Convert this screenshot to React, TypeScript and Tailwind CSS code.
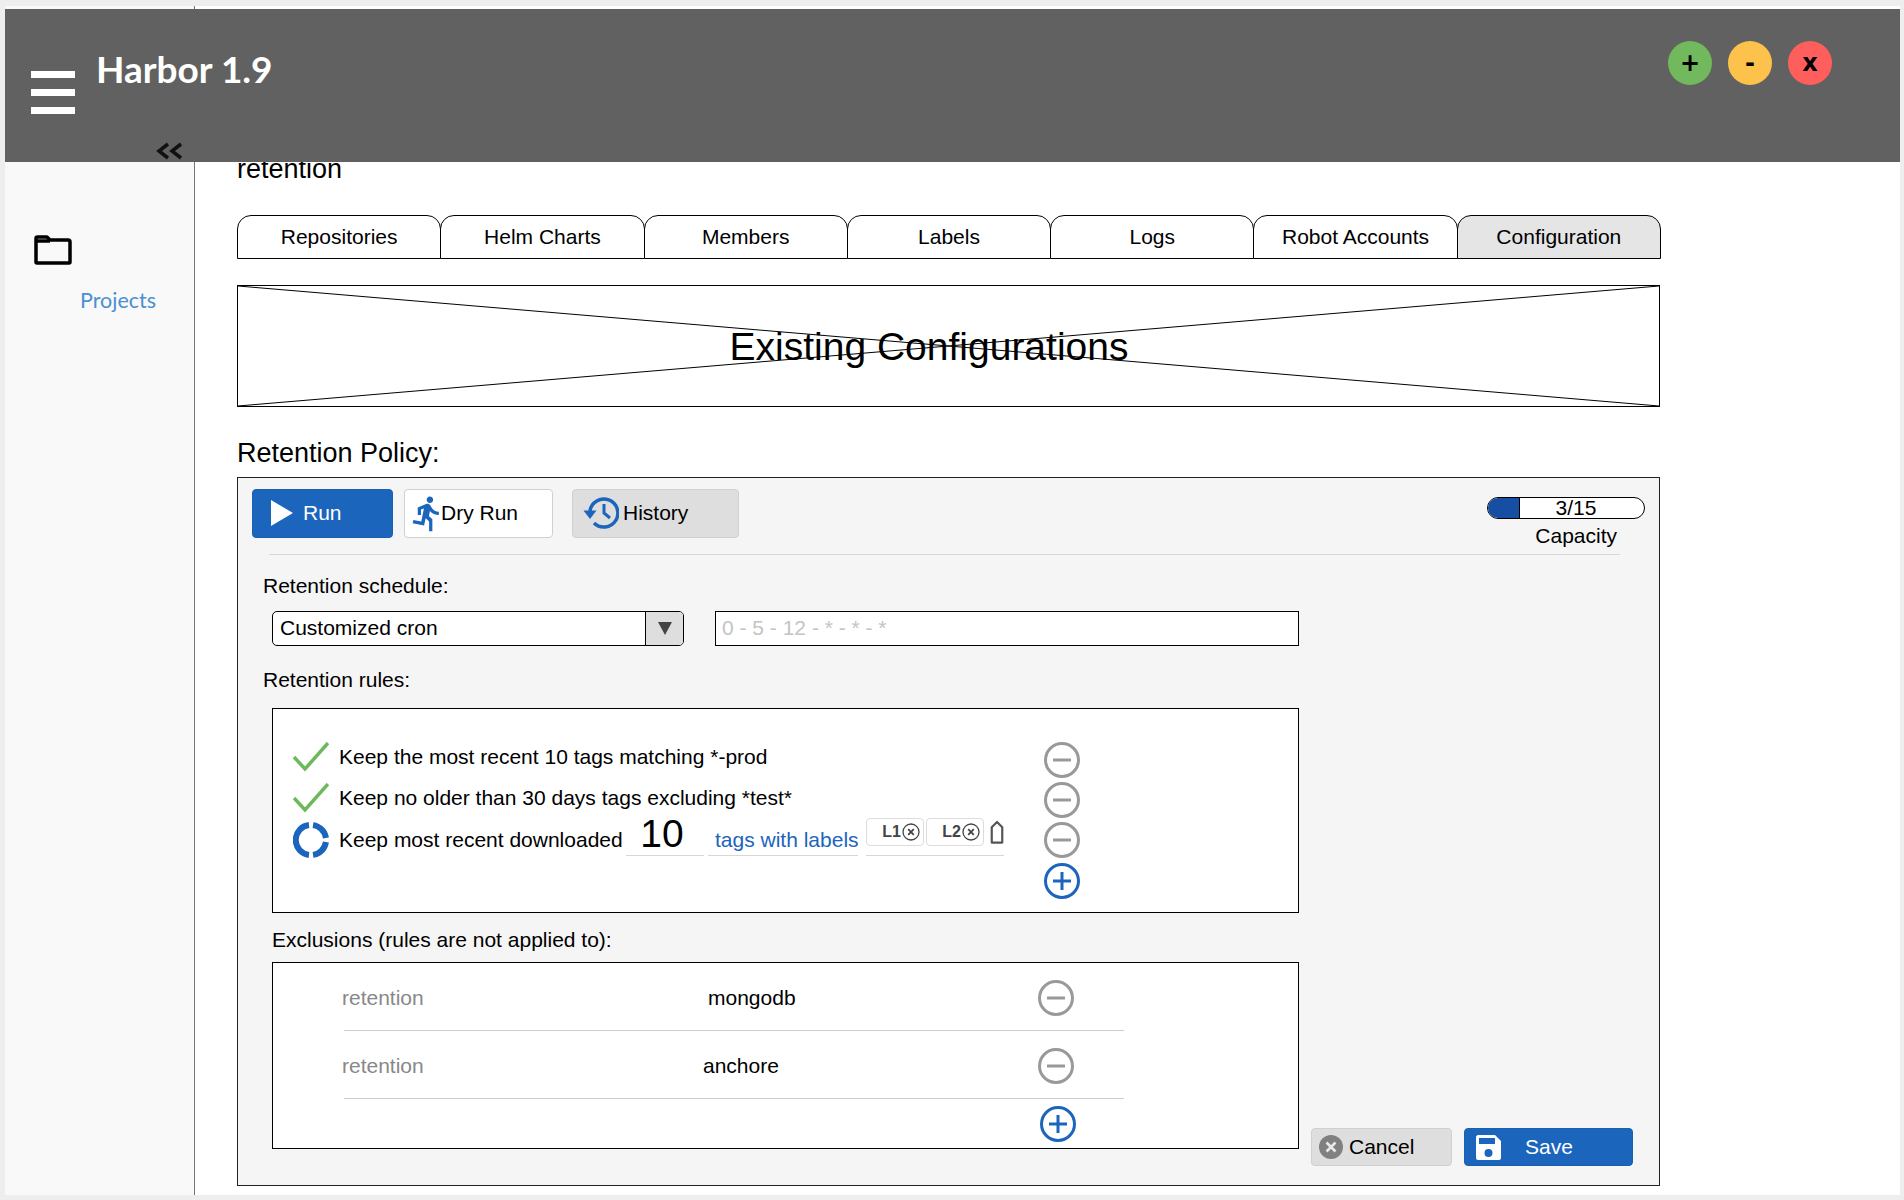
import { MdDirectionsRun } from "react-icons/md";

const tabs = ["Repositories", "Helm Charts", "Members", "Labels", "Logs", "Robot Accounts", "Configuration"];

function CircleIcon({ plus }: { plus?: boolean }) {
    const color = plus ? "#1b65bd" : "#999999";
    return (
        <svg width="36" height="36" viewBox="0 0 36 36" fill="none" stroke={color} strokeWidth="3">
            <circle cx="18" cy="18" r="16.5" />
            <path d="M9 18H27" />
            {plus && <path d="M18 9V27" />}
        </svg>
    );
}

function Check() {
    return (
        <svg width="36" height="30" viewBox="0 0 36 30" fill="none" stroke="#6cb95b" strokeWidth="3.5">
            <path d="M1 15L12 27L35 1" />
        </svg>
    );
}

function Spinner() {
    return (
        <svg width="36" height="36" viewBox="0 0 36 36" fill="none" stroke="#1b65bd" strokeWidth="6">
            <path d="M16 3.1A15 15 0 0 0 16 32.9" />
            <path d="M20 3.1A15 15 0 0 1 32.9 16" />
            <path d="M32.9 20A15 15 0 0 1 20 32.9" />
        </svg>
    );
}

function HistoryIcon() {
    return (
        <svg width="36" height="36" viewBox="0 0 36 36" fill="none" stroke="#1b65bd" strokeWidth="3.5">
            <path d="M11 28A14 14 0 1 0 7 16" />
            <path d="M0.5 15.5H13.5L7 24Z" fill="#1b65bd" stroke="none" />
            <path d="M21 9V18L27 23" strokeWidth="3" />
        </svg>
    );
}

function Chip({ name }: { name: string }) {
    return (
        <div className="w-[58px] h-[28px] shrink-0 border border-[#dddddd] rounded-[4px] flex items-center justify-end pr-[3px] gap-[1px] text-[16px] font-bold text-[#444444]">
            {name}
            <svg width="18" height="18" viewBox="0 0 18 18" fill="none" stroke="#444444" strokeWidth="1.3">
                <circle cx="9" cy="9" r="8" />
                <path d="M6.2 6.2L11.8 11.8M11.8 6.2L6.2 11.8" strokeWidth="1.8" />
            </svg>
        </div>
    );
}

function RoundButton({ bg, label }: { bg: string; label: string }) {
    return (
        <div className={`w-[44px] h-[44px] rounded-full flex items-center justify-center text-[24px] font-bold text-black font-['DejaVu_Sans'] ${bg}`}>
            {label}
        </div>
    );
}

function ExclusionRow({ name, offset }: { name: string; offset: string }) {
    return (
        <div className="ml-[71px] w-[780px] h-[68px] border-b border-[#cccccc] flex items-center pt-[3px]">
            <span className="w-[300px] shrink-0 -ml-[2px] text-[#888888]">retention</span>
            <span className={offset}>{name}</span>
            <div className="ml-auto mr-[50px]">
                <CircleIcon />
            </div>
        </div>
    );
}

export default function App() {
    return (
        <div className="w-full h-[1200px] bg-[#eeeeee] pl-[5px] pr-[4px] pt-[6px] font-['Liberation_Sans',sans-serif] text-[21px] text-black overflow-hidden">
            <div className="h-[3px] flex bg-white">
                <div className="w-[190px] bg-[#f9f9f9] border-r border-[#777777]"></div>
            </div>
            <header className="relative z-10 h-[153px] bg-[#616161] flex">
                <div className="w-[44px] ml-[26px] mt-[62px] flex flex-col gap-[11px]">
                    <div className="h-[7px] bg-white"></div>
                    <div className="h-[7px] bg-white"></div>
                    <div className="h-[7px] bg-white"></div>
                </div>
                <div className="ml-[21px] mt-[36px] font-['Lato',sans-serif] font-bold text-[37px] leading-[48px] text-white">Harbor 1.9</div>
                <svg className="absolute left-[151px] top-[132px]" width="28" height="20" viewBox="0 0 28 20" fill="none" stroke="#111111" strokeWidth="3.5">
                    <path d="M12 3L3 10L12 17M25 3L16 10L25 17" />
                </svg>
                <div className="ml-auto mr-[68px] mt-[32px] flex gap-[16px]">
                    <RoundButton bg="bg-[#72b85c]" label="+" />
                    <RoundButton bg="bg-[#fdc24b]" label="-" />
                    <RoundButton bg="bg-[#ff5f5c]" label="x" />
                </div>
            </header>
            <div className="h-[1033px] flex">
                <aside className="w-[190px] shrink-0 bg-[#f9f9f9] border-r border-[#777777]">
                    <svg className="ml-[29px] mt-[73px]" width="38" height="30" viewBox="0 0 38 30" fill="none" stroke="#000000" strokeWidth="3.5">
                        <path d="M2 27V3.5C2 2.5 2.5 2 3.5 2H13L16 5H34C35.2 5 36 5.8 36 7V27C36 27.6 35.6 28 35 28H3C2.4 28 2 27.6 2 27Z" strokeLinejoin="round" />
                        <path d="M2 6H16" />
                    </svg>
                    <div className="ml-[75px] mt-[20px] font-['Lato',sans-serif] text-[21.5px] leading-[30px] text-[#4a90d0]">Projects</div>
                </aside>
                <main className="flex-1 bg-white pl-[42px]">
                    <div className="w-[1423px]">
                        <div className="-mt-[11px] h-[37px] text-[27px] leading-[36px]">retention</div>
                        <div className="mt-[27px] flex h-[44px]">
                            {tabs.map((t) => (
                                <div
                                    key={t}
                                    className={`flex-1 -mr-px border border-black rounded-t-[14px] flex items-center justify-center ${t === "Configuration" ? "bg-[#e5e5e5]" : "bg-white"}`}
                                >
                                    {t}
                                </div>
                            ))}
                        </div>
                        <div className="relative mt-[26px] h-[122px] border border-black flex items-center justify-center pr-[39px] pt-[2px] text-[39px]">
                            <svg className="absolute inset-0 w-full h-full" viewBox="0 0 100 100" preserveAspectRatio="none" stroke="#000000" strokeWidth="1">
                                <path d="M0 0L100 100M100 0L0 100" vectorEffect="non-scaling-stroke" />
                            </svg>
                            <span className="relative">Existing Configurations</span>
                        </div>
                        <div className="mt-[28px] h-[42px] text-[27px] leading-[36px]">Retention Policy:</div>
                        <div className="h-[709px] border border-[#222222] bg-[#f5f5f5] pt-[11px]">
                            <div className="flex h-[49px] pl-[14px]">
                                <div className="w-[141px] shrink-0 bg-[#1b65bd] rounded-[4px] border border-[#1a5fb0] flex items-center pl-[18px] pb-[1px] text-white">
                                    <svg width="22" height="26" viewBox="0 0 22 26" fill="#ffffff">
                                        <path d="M0 0L22 13L0 26Z" />
                                    </svg>
                                    <span className="ml-[10px]">Run</span>
                                </div>
                                <div className="ml-[11px] w-[149px] shrink-0 bg-white rounded-[4px] border border-[#d0d0d0] flex items-center pl-[3px] pb-[1px]">
                                    <MdDirectionsRun className="text-[#1b65bd] w-[39px] h-[39px] shrink-0 -mr-[6px]" />
                                    Dry Run
                                </div>
                                <div className="ml-[19px] w-[167px] shrink-0 bg-[#dedede] rounded-[4px] border border-[#d0d0d0] flex items-center pl-[10px] pb-[1px] gap-[4px]">
                                    <HistoryIcon />
                                    History
                                </div>
                                <div className="ml-auto mr-[14px] mt-[8px] w-[158px] text-center">
                                    <div className="h-[22px] border border-black rounded-full bg-white flex overflow-hidden leading-[20px]">
                                        <div className="w-[32px] bg-[#154ea3] border-r border-black"></div>
                                        <div className="flex-1 pr-[12px]">3/15</div>
                                    </div>
                                    <div className="mt-[5px] pr-[28px] text-right leading-[24px]">Capacity</div>
                                </div>
                            </div>
                            <div className="ml-[31px] mr-[39px] mt-[16px] border-t border-[#d8d8d8]"></div>
                            <div className="ml-[25px] mt-[19px] leading-[24px]">Retention schedule:</div>
                            <div className="flex ml-[34px] mt-[13px] h-[35px]">
                                <div className="w-[412px] shrink-0 border border-black rounded-[5px] bg-white flex overflow-hidden">
                                    <div className="flex-1 pl-[7px] leading-[32px]">Customized cron</div>
                                    <div className="w-[38px] bg-[#dedede] border-l border-black flex items-center justify-center">
                                        <svg width="14" height="13" viewBox="0 0 14 13" fill="#444444">
                                            <path d="M0 0H14L7 13Z" />
                                        </svg>
                                    </div>
                                </div>
                                <div className="ml-[31px] w-[584px] shrink-0 border border-black bg-white pl-[6px] leading-[32px] text-[#c4c4c4]">0 - 5 - 12 - * - * - *</div>
                            </div>
                            <div className="ml-[25px] mt-[22px] leading-[24px]">Retention rules:</div>
                            <div className="ml-[34px] mt-[16px] w-[1027px] h-[205px] border border-black bg-white pt-[30px]">
                                <div className="h-[41px] flex items-center">
                                    <div className="ml-[20px] w-[46px] shrink-0 pb-[5px]"><Check /></div>
                                    <div className="w-[705px] shrink-0 pb-[5px]">Keep the most recent 10 tags matching *-prod</div>
                                    <CircleIcon />
                                </div>
                                <div className="h-[40px] flex items-center">
                                    <div className="ml-[20px] w-[46px] shrink-0 pb-[4px]"><Check /></div>
                                    <div className="w-[705px] shrink-0 pb-[5px]">Keep no older than 30 days tags excluding *test*</div>
                                    <CircleIcon />
                                </div>
                                <div className="h-[40px] flex items-center">
                                    <div className="ml-[20px] w-[46px] shrink-0"><Spinner /></div>
                                    <div className="w-[705px] shrink-0 flex items-end h-[32px]">
                                        <span className="w-[287px] shrink-0 leading-[32px] whitespace-nowrap">Keep most recent downloaded</span>
                                        <span className="w-[78px] shrink-0 border-b border-[#d8d8d8] text-center text-[39px] leading-[33px] pb-[5px] pr-[6px]">10</span>
                                        <span className="ml-[4px] w-[150px] shrink-0 pl-[7px] border-b border-[#d8d8d8] text-[#1b65bd] leading-[31px] whitespace-nowrap">tags with labels</span>
                                        <div className="ml-[8px] w-[138px] h-[38px] shrink-0 border-b border-[#d8d8d8] flex gap-[2px]">
                                            <Chip name="L1" />
                                            <Chip name="L2" />
                                            <svg className="ml-[4px] mt-[1px]" width="16" height="27" viewBox="0 0 16 27" fill="none" stroke="#555555" strokeWidth="2.5">
                                                <path d="M2 25V7.5L8 1.5L14 7.5V25Z" strokeLinejoin="round" />
                                            </svg>
                                        </div>
                                    </div>
                                    <CircleIcon />
                                </div>
                                <div className="h-[41px] flex items-center pl-[771px]">
                                    <CircleIcon plus />
                                </div>
                            </div>
                            <div className="ml-[34px] mt-[15px] leading-[24px]">Exclusions (rules are not applied to):</div>
                            <div className="flex items-end ml-[34px] mt-[10px]">
                                <div className="w-[1027px] shrink-0 h-[187px] border border-black bg-white">
                                    <ExclusionRow name="mongodb" offset="ml-[66px]" />
                                    <ExclusionRow name="anchore" offset="ml-[61px]" />
                                    <div className="h-[49px] pl-[767px] pt-[7px]">
                                        <CircleIcon plus />
                                    </div>
                                </div>
                                <div className="flex -mb-[17px]">
                                    <div className="ml-[12px] w-[141px] h-[38px] shrink-0 bg-[#dedede] rounded-[4px] border border-[#d0d0d0] flex items-center pl-[7px]">
                                        <svg width="24" height="24" viewBox="0 0 24 24">
                                            <circle cx="12" cy="12" r="12" fill="#808080" />
                                            <path d="M7.5 7.5L16.5 16.5M16.5 7.5L7.5 16.5" stroke="#e8e8e8" strokeWidth="2.6" />
                                        </svg>
                                        <span className="ml-[6px]">Cancel</span>
                                    </div>
                                    <div className="ml-[12px] w-[169px] h-[38px] shrink-0 bg-[#1b65bd] rounded-[4px] border border-[#1a5fb0] flex items-center pl-[11px] text-white">
                                        <svg width="25" height="25" viewBox="0 0 25 25">
                                            <path fillRule="evenodd" fill="#ffffff" d="M2 0H19L25 6V23C25 24 24 25 23 25H2C1 25 0 24 0 23V2C0 1 1 0 2 0ZM3 3V9H19V3ZM12.5 14A4 4 0 1 0 12.5 22A4 4 0 1 0 12.5 14Z" />
                                        </svg>
                                        <span className="ml-[24px]">Save</span>
                                    </div>
                                </div>
                            </div>
                        </div>
                    </div>
                </main>
            </div>
        </div>
    );
}
